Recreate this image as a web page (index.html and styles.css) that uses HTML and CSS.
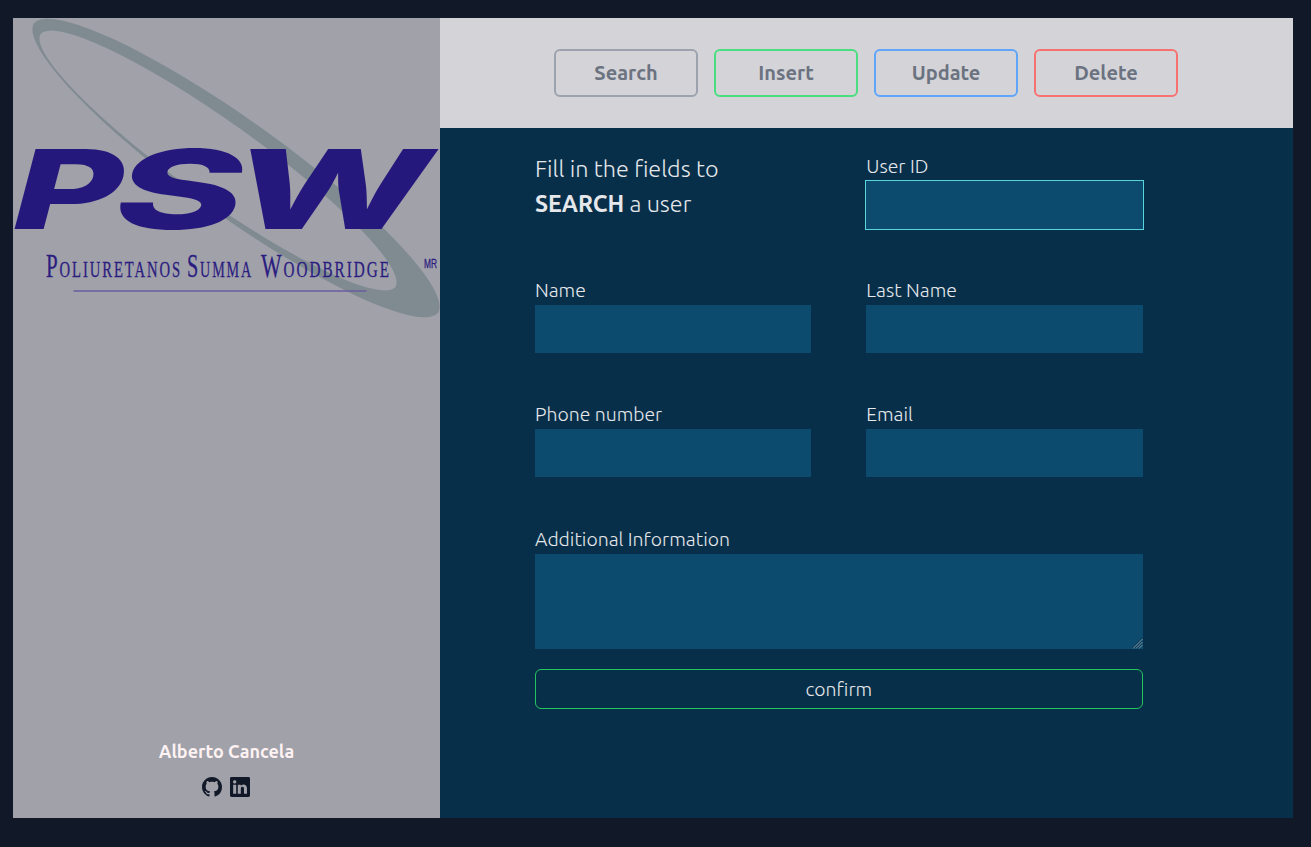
FILE: index.html
```html
<!DOCTYPE html>
<html lang="en">
<head>
<meta charset="utf-8">
<title>User administration</title>
<link rel="stylesheet" href="styles.css">
</head>
<body>
<div class="app">
  <aside class="sidebar">
    <svg class="logo" viewBox="13 18 427 300" role="img" aria-label="PSW Poliuretanos Summa Woodbridge">
      <path class="ring" fill-rule="evenodd" d="M33.9 23.3A248.6 48.2 35.6 0 1 438.1 312.7A248.6 48.2 35.6 0 1 33.9 23.3ZM40.5 34A218 39.4 35.47 0 1 395.5 287A218 39.4 35.47 0 1 40.5 34Z"/>
      <g class="initials">
        <text transform="translate(5 228.500) skewX(-14.7)" textLength="110" lengthAdjust="spacingAndGlyphs">P</text>
        <text transform="translate(107 228.500) skewX(-14.7)" textLength="129" lengthAdjust="spacingAndGlyphs">S</text>
        <text transform="translate(225 228.500) skewX(-14.7)" textLength="197" lengthAdjust="spacingAndGlyphs">W</text>
      </g>
      <g class="company">
        <text x="46" y="276.500" textLength="136" lengthAdjust="spacingAndGlyphs"><tspan class="cap">P</tspan>OLIURETANOS</text>
        <text x="187" y="276.500" textLength="66" lengthAdjust="spacingAndGlyphs"><tspan class="cap">S</tspan>UMMA</text>
        <text x="261" y="276.500" textLength="130" lengthAdjust="spacingAndGlyphs"><tspan class="cap">W</tspan>OODBRIDGE</text>
      </g>
      <text class="mark" x="424" y="267.500" textLength="13" lengthAdjust="spacingAndGlyphs">MR</text>
      <path class="rule" d="M73.500 291H366.500"/>
    </svg>
    <footer class="author">
      <p class="author-name">Alberto Cancela</p>
      <div class="social">
        <svg class="icon" viewBox="0 0 16 16"><path d="M8 0C3.58 0 0 3.58 0 8c0 3.54 2.29 6.53 5.47 7.59.4.07.55-.17.55-.38 0-.19-.01-.82-.01-1.49-2.01.37-2.53-.49-2.69-.94-.09-.23-.48-.94-.82-1.130-.28-.15-.68-.52-.01-.53.63-.01 1.080.58 1.230.82.72 1.210 1.870.87 2.330.66.07-.52.28-.87.51-1.070-1.780-.2-3.640-.89-3.640-3.950 0-.87.31-1.590.82-2.150-.08-.2-.36-1.020.08-2.120 0 0 .67-.21 2.200.82.64-.18 1.320-.27 2-.27s1.360.09 2 .27c1.530-1.040 2.200-.82 2.200-.82.44 1.100.16 1.920.08 2.120.51.56.82 1.270.82 2.150 0 3.070-1.870 3.750-3.650 3.950.29.25.54.73.54 1.480 0 1.070-.01 1.930-.01 2.200 0 .21.15.46.55.38A8.010 8.010 0 0 0 16 8c0-4.420-3.580-8-8-8Z"/></svg>
        <svg class="icon" viewBox="0 0 16 16"><path d="M0 1.146C0 .513.526 0 1.175 0h13.650C15.474 0 16 .513 16 1.146v13.708c0 .633-.526 1.146-1.175 1.146H1.175C.526 16 0 15.487 0 14.854V1.146zm4.943 12.248V6.169H2.542v7.225h2.401zm-1.200-8.212c.837 0 1.358-.554 1.358-1.248-.015-.709-.52-1.248-1.342-1.248-.822 0-1.359.54-1.359 1.248 0 .694.521 1.248 1.327 1.248h.016zm4.908 8.212V9.359c0-.216.016-.432.08-.586.173-.431.568-.878 1.232-.878.869 0 1.216.662 1.216 1.634v3.865h2.401V9.250c0-2.220-1.184-3.252-2.764-3.252-1.274 0-1.845.7-2.165 1.193v.025h-.016l.016-.025V6.169h-2.400c.03.678 0 7.225 0 7.225h2.400z"/></svg>
      </div>
    </footer>
  </aside>
  <main class="panel">
    <nav class="actions">
      <button class="action search">Search</button>
      <button class="action insert">Insert</button>
      <button class="action update">Update</button>
      <button class="action delete">Delete</button>
    </nav>
    <form class="form">
      <p class="intro">Fill in the fields to<br><b>SEARCH</b> a user</p>
      <label class="field"><span class="label">User ID</span><input class="input focused"></label>
      <label class="field"><span class="label">Name</span><input class="input"></label>
      <label class="field"><span class="label">Last Name</span><input class="input"></label>
      <label class="field"><span class="label">Phone number</span><input class="input"></label>
      <label class="field"><span class="label">Email</span><input class="input"></label>
      <label class="field wide"><span class="label">Additional Information</span><textarea class="input area"></textarea>
        <svg class="grip" viewBox="0 0 11 11"><path class="grip-dark" d="M0 10L10 0M3 10L10 3M6 10L10 6"/><path class="grip-light" d="M1 10.500L10.500 1M4 10.500L10.500 4M7 10.500L10.500 7"/></svg>
      </label>
      <button class="confirm" type="button">confirm</button>
    </form>
  </main>
</div>
</body>
</html>
```
FILE: styles.css
```css
* { box-sizing: border-box; }
body {
  margin: 0;
  padding: 18px 13px;
  height: 847px;
  overflow: hidden;
  background: #111827;
  font-family: Ubuntu, "Open Sans", "Noto Sans", sans-serif;
}
p { margin: 0; }
button, input, textarea { font: inherit; margin: 0; }
.app { display: flex; width: 1280px; height: 800px; }
.sidebar {
  display: flex;
  flex-direction: column;
  justify-content: space-between;
  width: 427px;
  background: #a1a1aa;
}
.logo { display: block; width: 427px; height: 300px; overflow: visible; }
.ring { fill: #7f8b90; }
.initials { fill: #24187c; font: 800 110px Inter, sans-serif; }
.company {
  fill: #2b1d80;
  stroke: #2b1d80;
  stroke-width: 0.3px;
  font: 23px "Liberation Serif", serif;
  letter-spacing: 3px;
}
.company .cap { font-size: 33px; }
.mark {
  fill: #2b1d80;
  stroke: #2b1d80;
  stroke-width: 0.3px;
  font: 13px "Liberation Sans", sans-serif;
}
.rule { stroke: #6a5c9f; stroke-width: 1.7; }
.author {
  display: flex;
  flex-direction: column;
  align-items: center;
  gap: 12px;
  padding-bottom: 21px;
}
.author-name {
  color: #fef2f2;
  font-size: 18px;
  font-weight: 600;
  line-height: 28px;
}
.social { display: flex; gap: 8px; margin-right: 1px; }
.icon { width: 20px; height: 20px; fill: #111827; }
.panel { width: 853px; background: #082f49; }
.actions {
  display: flex;
  justify-content: center;
  align-items: center;
  gap: 16px;
  height: 110px;
  padding-right: 1px;
  background: #d4d4d8;
}
.action {
  width: 144px;
  height: 48px;
  padding: 0 0 2px;
  border: 2px solid #9ca3af;
  border-radius: 6px;
  background: transparent;
  color: #6b7280;
  font-size: 20px;
  font-weight: 600;
}
.insert { border-color: #4ade80; }
.update { border-color: #60a5fa; }
.delete { border-color: #f87171; }
.form {
  display: grid;
  grid-template-columns: 276.3px 276.3px;
  grid-template-rows: 72px 72px 72px 120px 40px;
  column-gap: 55px;
  row-gap: 52px;
  padding: 29px 0 0 95px;
  color: #e5e7eb;
  font-weight: 300;
}
.intro { margin-top: -6px; font-size: 23.4px; line-height: 35px; white-space: nowrap; }
.intro b { font-weight: 600; font-size: 23px; }
.field { display: flex; flex-direction: column; }
.label {
  height: 24px;
  font-size: 19.4px;
  line-height: 18px;
  white-space: nowrap;
}
.input {
  display: block;
  width: 100%;
  height: 48px;
  padding: 8px;
  border: 0;
  border-radius: 0;
  outline: none;
  background: #0c4a6e;
  color: #e5e7eb;
}
.focused { outline: 1px solid #58d5db; }
.wide { position: relative; grid-column: 1 / 3; margin-top: 1px; }
.area { height: 95px; resize: none; }
.grip { position: absolute; right: 0; bottom: 0; width: 11px; height: 11px; fill: none; }
.grip-dark { stroke: #12384f; }
.grip-light { stroke: #7893a3; }
.confirm {
  grid-column: 1 / 3;
  height: 40px;
  margin-top: -32px;
  padding: 0;
  border: 1px solid #22c55e;
  border-radius: 6px;
  background: transparent;
  color: #e5e7eb;
  font-size: 19.4px;
  font-weight: 300;
}
```
